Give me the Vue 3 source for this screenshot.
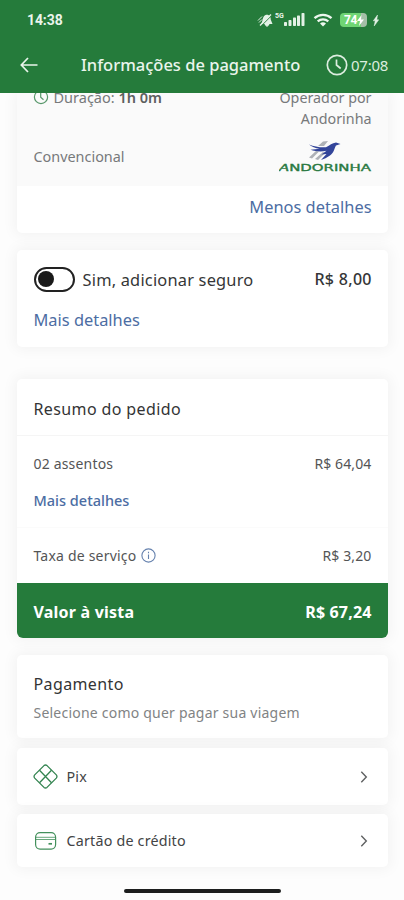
<script setup>
const methods = [
  { id: 'pix', label: 'Pix' },
  { id: 'card', label: 'Cartão de crédito' },
]
</script>

<template>
  <div class="screen">
    <header class="top">
      <div class="status">
        <span class="time">14:38</span>
        <div class="indicators">
          <svg class="bell" width="17" height="16" viewBox="0 0 17 16">
            <path d="M4 12C6 10 5 4.500 8.500 3c3.200-1 5.500 1.500 5.200 4.500l1.800 4.500z" fill="#e4f1e6" />
            <path d="M8 12.500h4l-2 2zM1 8.500l4-4M2 10.500l3-3" stroke="#e4f1e6" fill="#e4f1e6" />
            <path d="M4.200 14 15 3.200" stroke="#257b3b" stroke-width="1" />
            <path d="M3 13.500 14 2.500" stroke="#e4f1e6" stroke-width="1.500" />
          </svg>
          <span class="net">5G</span>
          <svg class="bars" width="21" height="14" viewBox="0 0 21 14" fill="#e4f1e6">
            <rect x="0" y="9" width="3" height="4" rx=".7" /><rect x="4.500" y="7" width="3" height="6" rx=".7" />
            <rect x="9" y="4.500" width="3" height="8.500" rx=".7" /><rect x="13" y="2.500" width="3" height="10.500" rx=".7" />
            <rect x="17.500" y="0" width="3" height="13" rx=".7" />
          </svg>
          <svg class="wifi" width="20" height="14" viewBox="0 0 20 14" fill="none" stroke="#edf7ee" stroke-width="2.300">
            <path d="M1.500 5.200a12.500 12.500 0 0 1 17 0M4.700 8.400a8 8 0 0 1 10.600 0" />
            <path d="M7 10.500a4.600 4.600 0 0 1 6 0l-3 3z" fill="#edf7ee" stroke="none" />
          </svg>
          <span class="battery">74<svg width="7" height="11" viewBox="0 0 7 11"><path d="M4.500 0 0 6h3l-1 5 5-6.500H4z" fill="#fff" /></svg></span>
          <svg class="bolt" width="6" height="11" viewBox="0 0 6 11"><path d="M4.500 0 .3 5.800h1.900L1.200 11l4.500-6.200H3.800z" fill="#e4f1e6" stroke="#e4f1e6" stroke-width=".5" /></svg>
        </div>
      </div>
      <div class="nav">
        <svg class="back" width="18" height="16" viewBox="0 0 18 16" fill="none" stroke="#eaf5ec" stroke-width="1.700"><path d="M17.500 8H1.500M8 1 1.300 8 8 15" /></svg>
        <h1>Informações de pagamento</h1>
        <svg class="clock" width="22" height="22" viewBox="0 0 22 22" fill="none" stroke="#dceddf" stroke-width="1.700"><circle cx="11" cy="11" r="9.700" /><path d="M10.500 5.500V11l4.200 3.500" /></svg>
        <span class="countdown">07:08</span>
      </div>
    </header>

    <main>
      <section class="card trip">
        <div class="trip-body">
          <div class="duration">
            <svg width="16" height="16" viewBox="0 0 16 16" fill="none" stroke="#57976a" stroke-width="1.200"><circle cx="8" cy="8" r="6.600" /><path d="M7.700 4v4.300l2.800 2.400" /></svg>
            <span>Duração: <b>1h 0m</b></span>
          </div>
          <div class="operator"><span>Operador por</span><span class="name">Andorinha</span></div>
          <span class="class">Convencional</span>
          <svg class="logo" width="93" height="32" viewBox="0 0 93 32">
            <path d="m30 17.500 7-6.500 3 .5-7 7zM39 6l5-4.500 5-.5-4 5zM36 19l8-7 2 1-7 7z" fill="#aeb1b6" />
            <path d="M30 4.500c5 2 10 3 17 2.800C51 5 53 3 57 2.500L61.500 4 57 5.500c-2 3-1.500 7-6 10-3 2-6 3.500-9 4.500l5.500-6-5 .5 5-3.700c-5 1-11 .8-16-1l9-1c-4-.5-8-2-10.500-4.300z" fill="#33459a" />
            <text x="0" y="31.300" textLength="92" lengthAdjust="spacingAndGlyphs"><tspan class="slant">A</tspan>NDORINHA</text>
          </svg>
        </div>
        <div class="less"><a>Menos detalhes</a></div>
      </section>

      <section class="card insurance">
        <div class="line">
          <span class="toggle"><i></i></span>
          <span class="label">Sim, adicionar seguro</span>
          <span class="price">R$ 8,00</span>
        </div>
        <a>Mais detalhes</a>
      </section>

      <section class="card summary">
        <h2>Resumo do pedido</h2>
        <div class="seats">
          <div class="line"><span class="qty">02 assentos</span><span class="amount">R$ 64,04</span></div>
          <a>Mais detalhes</a>
        </div>
        <div class="line fee">
          <span class="feename">Taxa de serviço</span>
          <svg width="15" height="15" viewBox="0 0 15 15" fill="none" stroke="#6682ae" stroke-width="1.100"><circle cx="7.500" cy="7.500" r="6.600" /><path d="M7.500 6.500v4.500M7.500 3.800v1.400" /></svg>
          <span class="amount">R$ 3,20</span>
        </div>
        <div class="line total"><span class="tl">Valor à vista</span><span class="tv">R$ 67,24</span></div>
      </section>

      <section class="card payment">
        <h2>Pagamento</h2>
        <p>Selecione como quer pagar sua viagem</p>
      </section>

      <section v-for="m in methods" :key="m.id" class="card method" :class="m.id">
        <svg v-if="m.id === 'pix'" width="25" height="26" viewBox="0 0 25 26" fill="none" stroke="#338450" stroke-width="1.300" stroke-linejoin="round">
          <path d="m11 1.600-9.300 9.300q-1.300 1.600 0 3.200l9.300 9.300q1.500 1.300 3 0l9.300-9.300q1.300-1.600 0-3.200L14 1.600q-1.500-1.300-3 0z" />
          <path d="M6.500 6.300 12.500 12.500l6-6.200M6.500 18.700l6-6.200 6 6.200" />
        </svg>
        <svg v-else width="25" height="26" viewBox="0 0 25 26" fill="none" stroke="#43905c" stroke-width="1.200">
          <rect x="2.600" y="4.600" width="20" height="16.500" rx="4.500" /><path d="M2.600 9.300h20M2.600 11.500h20" stroke-width=".8" /><path d="M15.500 15.800h3.500" stroke-width="1.700" />
        </svg>
        <span>{{ m.label }}</span>
        <svg class="chev" width="8" height="12" viewBox="0 0 8 12" fill="none" stroke="#5f6162" stroke-width="1.400"><path d="m1.300.8 5 5.200-5 5.200" /></svg>
      </section>
    </main>
    <div class="home"></div>
  </div>
</template>

<style>
body { margin: 0; background: #fdfdfd; overflow: hidden; }
</style>
<style scoped>
* { box-sizing: border-box; }
.screen { width: 404px; height: 900px; overflow: hidden; display: flex; flex-direction: column; align-items: center; background: #fdfdfd; font-family: "Noto Sans", sans-serif; font-size: 14px; color: #545556; white-space: nowrap; }
h1, h2, p { margin: 0; font-weight: 400; }
a { color: #4c6da3; }
.top { width: 100%; height: 93px; flex: none; background: #257b3b; color: #eaf5ec; position: relative; z-index: 1; }
.status { height: 40px; padding: 0 25px 0 27px; display: flex; align-items: center; justify-content: space-between; }
.time { font: 700 14px/20px Roboto, sans-serif; letter-spacing: -.1px; }
.indicators { display: flex; align-items: center; height: 20px; }
.bell { margin-right: 1px; }
.net { font: 700 7px/8px Roboto, sans-serif; align-self: flex-start; margin-top: 2px; width: 9px; }
.bars { margin-right: 8px; }
.wifi { margin-right: 7px; }
.battery { width: 27px; height: 14px; border-radius: 4px; background: linear-gradient(90deg, #6fd574 76%, #a5bfa8 76%); color: #fff; font: 700 12px/14px Roboto, sans-serif; padding-left: 4px; display: flex; align-items: center; letter-spacing: -.4px; }
.bolt { margin-left: 6px; }
.nav { height: 50px; padding: 0 15px 0 20px; display: flex; align-items: center; }
h1 { margin-left: 43px; width: 219px; font-size: 16.500px; font-weight: 500; line-height: 24px; }
.clock { margin-left: 26px; }
.countdown { margin-left: 3px; font-size: 15px; letter-spacing: -.25px; color: #dceddf; }
main { width: 371px; flex: none; height: 774px; }
.card { background: #fff; box-shadow: 0 0 14px 3px rgba(0,0,0,.042); border-radius: 5px; }
.line { display: flex; align-items: center; }
.trip { height: 140px; margin-bottom: 17px; }
.trip-body { height: 93px; background: #fafafa; padding: 0 16px; display: grid; grid-template-columns: 1fr 110px; grid-template-rows: 45px 48px; color: #77797a; }
.duration { display: flex; align-items: center; gap: 5px; height: 20px; margin-top: -6px; font-size: 14.5px; }
.duration b { font-weight: 600; color: #5d5f60; }
.operator { display: flex; flex-direction: column; align-items: flex-end; line-height: 21px; margin-top: -6px; font-size: 14.300px; }
.class { font-size: 14.4px; line-height: 20px; margin: 9px 0 0 1px; }
.logo { justify-self: end; margin-top: 2px; }
.logo text { font: 400 9.500px "DejaVu Sans", sans-serif; fill: #297941; stroke: #297941; stroke-width: .35px; }
.logo .slant { font-style: italic; }
.less { height: 47px; display: flex; justify-content: flex-end; padding: 9px 16px; font-size: 16.4px; line-height: 24px; }
.insurance { height: 97px; margin-bottom: 32px; padding: 16px 16px 0 17px; font-size: 16.4px; }
.insurance .line { height: 26px; margin-bottom: 16px; color: #353637; }
.insurance .label { letter-spacing: .2px; }
.insurance a { display: block; line-height: 24px; }
.toggle { width: 41px; height: 25px; border: 2px solid #222; border-radius: 13px; padding: 2.500px; margin-right: 8px; }
.toggle i { display: block; width: 16px; height: 16px; border-radius: 50%; background: #191919; }
.price { margin-left: auto; font-weight: 500; font-size: 16px; letter-spacing: .3px; margin-right: -.3px; }
.summary { height: 259px; margin-bottom: 17px; }
h2 { font-size: 16px; color: #333435; line-height: 24px; letter-spacing: .38px; }
.summary h2 { height: 57px; padding: 18px 17px; border-bottom: 1px solid #f5f5f5; }
.seats { height: 92px; padding: 17px 16px 0 17px; border-bottom: 1px solid #fbfbfb; }
.seats .line { height: 20px; margin-bottom: 17px; }
.qty { letter-spacing: .18px; }
.seats a { display: block; line-height: 20px; font-size: 14.500px; font-weight: 500; }
.amount { margin-left: auto; letter-spacing: .12px; }
.fee { height: 55px; padding: 0 16px 0 17px; }
.feename { letter-spacing: .2px; }
.fee svg { margin-left: 5px; }
.total { height: 55px; padding: 2px 16px 0 17px; background: #257b3b; color: #fff; border-radius: 0 0 6px 6px; font-size: 16px; font-weight: 700; letter-spacing: .22px; }
.tv { margin-left: auto; letter-spacing: .15px; }
.payment { height: 83px; margin-bottom: 10px; padding: 17px 16px 0 17px; }
.payment p { color: #818384; line-height: 20px; margin-top: 7px; font-size: 14px; letter-spacing: .22px; }
.method { display: flex; align-items: center; height: 57px; padding: 0 20px 0 16px; margin-bottom: 9px; }
.method span { margin-left: 9px; font-size: 14.300px; letter-spacing: .2px; color: #434445; }
.method:last-child { height: 53px; }
.chev { margin-left: auto; }
.home { width: 157px; height: 4px; flex: none; margin-top: 22px; border-radius: 2px; background: #1d1e1e; }
</style>
